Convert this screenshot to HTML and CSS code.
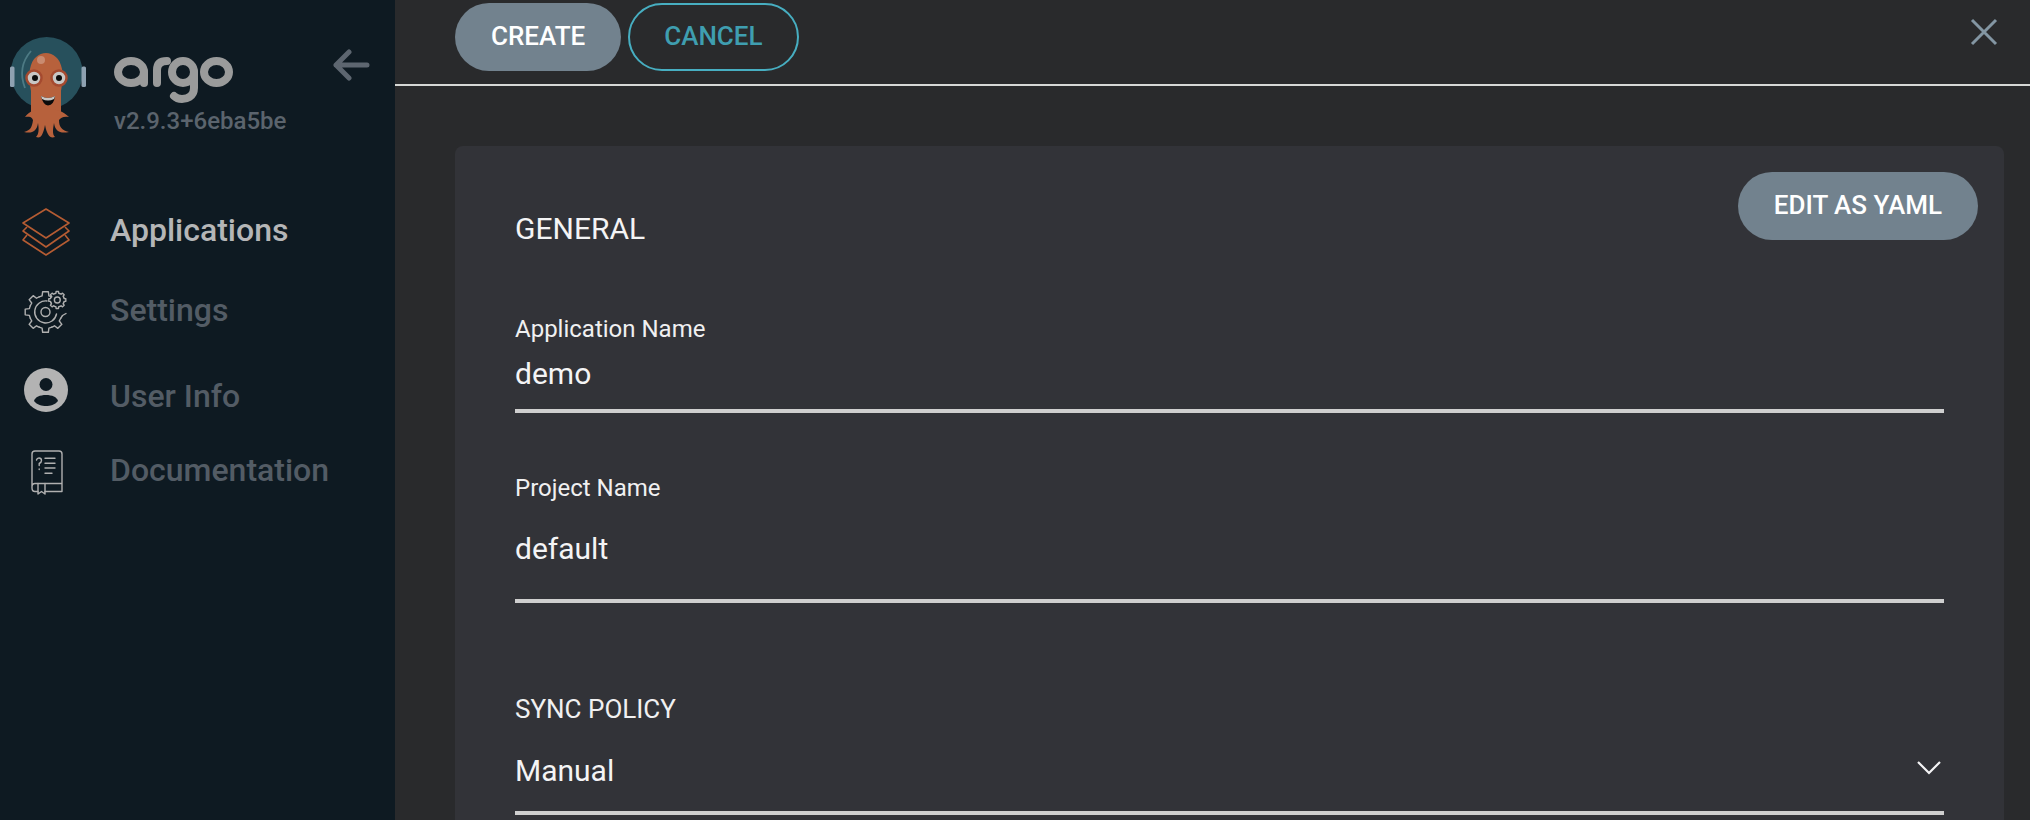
FILE: index.html
```html
<!DOCTYPE html>
<html lang="en">
<head>
<meta charset="utf-8">
<title>Argo CD</title>
<link rel="stylesheet" href="styles.css">
</head>
<body>
<div class="app">
  <aside class="sidebar">
    <div class="brand">
      <svg class="logo" viewBox="0 0 100 120" aria-hidden="true">
        <circle cx="46.700" cy="48" r="36" fill="#27505c"/>
        <path d="M31 26Q17 42 25 63" fill="none" stroke="#4d7a84" stroke-width="1.800"/>
        <rect x="10" y="41.500" width="4.500" height="20.500" rx="1.500" fill="#8ea1b1"/>
        <rect x="81.500" y="41.500" width="4.500" height="20.500" rx="1.500" fill="#8ea1b1"/>
        <path d="M31 88V66C29 55 29 48 30 44C32 33 39 28 46 28C53 28 60 33 62 44C63 48 63 55 61 66V88Z" fill="#b7613c"/>
        <path transform="translate(-2 -2)" d="M48 86C38 86 31 88 27 94C33 93 34 95 35 97C34 104 33 107 26 109C34 111 39 108 40 100C41 106 41 111 38 114C43 116 45 112 47 102C49 112 52 116 57 114C54 111 55 106 56 100C57 108 62 111 71 109C63 107 61 103 61 97C63 95 65 93 71 94C65 88 58 86 48 86Z" fill="#b7613c"/>
        <circle cx="41" cy="35" r="4" fill="#c98b70"/>
        <circle cx="34" cy="53" r="7.500" fill="#c8c6c4" stroke="#a54a2f" stroke-width="2.500"/>
        <circle cx="59" cy="53" r="7.500" fill="#c8c6c4" stroke="#a54a2f" stroke-width="2.500"/>
        <circle cx="35" cy="53" r="3" fill="#0b0b0b"/>
        <circle cx="59" cy="53" r="3" fill="#0b0b0b"/>
        <path d="M41 71Q48 75 55 71Q54 80 48 80.500Q43 80 41 71Z" fill="#0b0b0b"/>
        <path d="M41 71Q48 75 55 71L54 74Q48 77 42 74Z" fill="#c9c6c2"/>
      </svg>
      <div class="brand-text">
        <svg class="wordmark" viewBox="0 0 120 50" aria-hidden="true">
          <g fill="none" stroke="#9a9b9b" stroke-width="8" stroke-linecap="round">
            <ellipse cx="17" cy="17" rx="13" ry="11"/>
            <path d="M30 17V28"/>
            <path d="M43 28V15Q43 6 53 6"/>
            <ellipse cx="69" cy="17" rx="11" ry="11"/>
            <path d="M80 17V33C80 42 72 44 68 44C65 44 62 43 60 41"/>
            <ellipse cx="102.500" cy="17" rx="12.500" ry="11"/>
          </g>
        </svg>
        <div class="version">v2.9.3+6eba5be</div>
      </div>
      <svg class="collapse" viewBox="0 0 38 32" aria-hidden="true">
        <path d="M16 3L3 16L16 29M3 16H34" fill="none" stroke="#5d6670" stroke-width="5" stroke-linecap="round" stroke-linejoin="round"/>
      </svg>
    </div>
    <nav class="nav">
      <a class="nav-item nav-active">
        <svg class="nav-icon" viewBox="0 0 48 48" aria-hidden="true">
          <g fill="none" stroke="#b55c33" stroke-width="1.600" stroke-linejoin="round">
            <path d="M24 1L47 15L24 30L1 15Z"/>
            <path d="M5 19L1 23L24 39L47 23L43 19"/>
            <path d="M5 27L1 32L24 47L47 32L43 27"/>
          </g>
        </svg>
        <span>Applications</span>
      </a>
      <a class="nav-item nav-settings">
        <svg class="nav-icon" viewBox="0 0 44 44" aria-hidden="true">
          <g fill="none" stroke="#b0b0b0" stroke-width="1.400" stroke-linejoin="round" stroke-linecap="round">
            <g transform="translate(21.500 22)">
              <path id="gear-tooth" vector-effect="non-scaling-stroke" d="M-6.300 -15.200Q-5 -15.700 -3.400 -16.100L-2.850 -20.300H2.850L3.400 -16.100Q5 -15.700 6.300 -15.200"/>
              <use href="#gear-tooth" transform="rotate(-45)"/>
              <use href="#gear-tooth" transform="rotate(-90)"/>
              <use href="#gear-tooth" transform="rotate(-135)"/>
              <use href="#gear-tooth" transform="rotate(180)"/>
              <use href="#gear-tooth" transform="rotate(135)"/>
              <path d="M15.200 6.300L17 3.500L20.500 1.500"/>
              <path d="M1.500 -11A11 11 0 1 0 11 2"/>
              <circle r="4.500"/>
            </g>
            <g transform="translate(33.300 10) scale(.42)">
              <use href="#gear-tooth"/>
              <use href="#gear-tooth" transform="rotate(45)"/>
              <use href="#gear-tooth" transform="rotate(90)"/>
              <use href="#gear-tooth" transform="rotate(135)"/>
              <use href="#gear-tooth" transform="rotate(180)"/>
              <use href="#gear-tooth" transform="rotate(225)"/>
              <use href="#gear-tooth" transform="rotate(270)"/>
              <use href="#gear-tooth" transform="rotate(315)"/>
              <circle r="7" vector-effect="non-scaling-stroke"/>
            </g>
          </g>
        </svg>
        <span>Settings</span>
      </a>
      <a class="nav-item nav-user">
        <svg class="nav-icon" viewBox="0 0 44 44" aria-hidden="true">
          <circle cx="22" cy="22" r="22" fill="#b3b3b3"/>
          <circle cx="22" cy="16.500" r="6.500" fill="#0e1a22"/>
          <path d="M10 33C11 29 16 27 22 27C28 27 33 29 34 33C31 37 26 38 22 38C18 38 13 37 10 33Z" fill="#0e1a22"/>
        </svg>
        <span>User Info</span>
      </a>
      <a class="nav-item nav-docs">
        <svg class="nav-icon" viewBox="0 0 44 46" aria-hidden="true">
          <g fill="none" stroke="#b0b0b0" stroke-width="1.400" stroke-linecap="round" stroke-linejoin="round">
            <path d="M38 36V5Q38 2 35 2H11Q8 2 8 5V39Q8 42.500 11 42.500H14M21 42.500H38V34.500H11Q8 34.500 8 38"/>
            <path d="M14 34.500V45L17.500 42.500L21 45V34.500"/>
            <path d="M21 9.300H31M21 14.300H31M21 19H31M21 24.300H28"/>
            <path d="M12.500 11Q13 9 15 9Q17.500 9 17.500 11.500Q17.500 13.500 15.200 14.500V16.500M15.200 20V20.600"/>
          </g>
        </svg>
        <span>Documentation</span>
      </a>
    </nav>
  </aside>
  <main class="panel">
    <header class="panel-header">
      <div class="actions">
        <button class="btn btn-solid" type="button">CREATE</button>
        <button class="btn btn-outline" type="button">CANCEL</button>
      </div>
      <svg class="close" viewBox="0 0 28 28" aria-hidden="true">
        <path d="M2 2L26 26M26 2L2 26" stroke="#8396a3" stroke-width="3" fill="none"/>
      </svg>
    </header>
    <section class="card">
      <button class="btn btn-solid btn-yaml" type="button">EDIT AS YAML</button>
      <h2 class="section-title">GENERAL</h2>
      <div class="field field-name">
        <label class="field-label">Application Name</label>
        <div class="field-value">demo</div>
      </div>
      <div class="field field-project">
        <label class="field-label">Project Name</label>
        <div class="field-value">default</div>
      </div>
      <div class="field field-sync">
        <label class="field-label field-label-caps">SYNC POLICY</label>
        <div class="field-value field-select">
          <span>Manual</span>
          <svg class="chevron" viewBox="0 0 26 16" aria-hidden="true">
            <path d="M2 2L13 13L24 2" fill="none" stroke="#f4f4f5" stroke-width="2.200"/>
          </svg>
        </div>
      </div>
    </section>
  </main>
</div>
</body>
</html>
```
FILE: styles.css
```css
* { box-sizing: border-box; }
html, body { margin: 0; padding: 0; height: 100%; overflow: hidden; background: #292a2c; }
body { font-family: Roboto, "Liberation Sans", sans-serif; color: #f4f4f5; }
.app { display: flex; height: 820px; }

.sidebar { width: 395px; flex: none; background: #0e1a22; }
.brand { display: flex; height: 130px; padding: 25px 0 0 0; position: relative; }
.logo { width: 100px; height: 120px; flex: none; }
.brand-text { margin-left: 14px; padding-top: 30px; }
.wordmark { display: block; width: 120px; height: 50px; }
.version { font-size: 24px; line-height: 26px; font-weight: 500; color: #5b646d; margin-top: 3px; white-space: nowrap; }
.collapse { width: 38px; height: 32px; position: absolute; left: 333px; top: 49px; }

.nav { display: flex; flex-direction: column; padding-top: 77px; }
.nav-item { display: flex; align-items: center; height: 46px; padding-left: 22px; font-size: 32px; font-weight: 500; color: #535c65; }
.nav-icon { width: 48px; height: 48px; flex: none; margin-right: 40px; }
.nav-active { color: #b5b6b7; }
.nav-active .nav-icon { margin-top: 4px; }
.nav-settings { margin-top: 34px; }
.nav-settings .nav-icon { width: 44px; height: 44px; margin: 4px 42px 0 2px; }
.nav-user { margin-top: 40px; }
.nav-user .nav-icon { width: 44px; height: 44px; margin: -12px 42px 0 2px; }
.nav-docs { margin-top: 28px; }
.nav-docs .nav-icon { width: 44px; height: 46px; margin: 4px 42px 0 2px; }

.panel { flex: 1; min-width: 0; padding: 0 0 0 60px; }
.panel-header { display: flex; justify-content: space-between; height: 86px; margin-left: -60px; padding: 3px 0 0 60px; border-bottom: 2px solid #d6d8d6; position: relative; }
.actions { display: flex; gap: 7px; }
.btn { height: 68px; border-radius: 34px; border: 2px solid transparent; font-family: inherit; font-size: 26px; font-weight: 500; padding: 0 34px 2px; }
.btn-solid { background: #72828e; color: #fff; }
.btn-outline { background: transparent; border-color: #47aec1; color: #3f9eb0; }
.close { width: 28px; height: 28px; position: absolute; right: 32px; top: 18px; }

.card { position: relative; height: 700px; margin: 60px 26px 0 0; padding: 66px 60px 0; background: #323338; border-radius: 8px; }
.btn-yaml { position: absolute; top: 26px; right: 26px; }
.section-title { margin: 0; font-size: 30px; line-height: 34px; font-weight: 400; color: #f4f4f5; }
.field-label { display: block; font-size: 24px; line-height: 28px; color: #f0f0f1; }
.field-value { font-size: 30px; line-height: 40px; color: #f4f4f5; border-bottom: 4px solid #cfcfcf; }
.field-name { margin-top: 69px; }
.field-name .field-value { height: 70px; padding-top: 11px; }
.field-project { margin-top: 61px; }
.field-project .field-value { height: 101px; padding-top: 27px; }
.field-sync { margin-top: 92px; }
.field-label-caps { font-size: 26px; }
.field-select { display: flex; justify-content: space-between; height: 92px; padding-top: 28px; }
.chevron { width: 26px; height: 16px; margin: 9px 2px 0 0; }
```
